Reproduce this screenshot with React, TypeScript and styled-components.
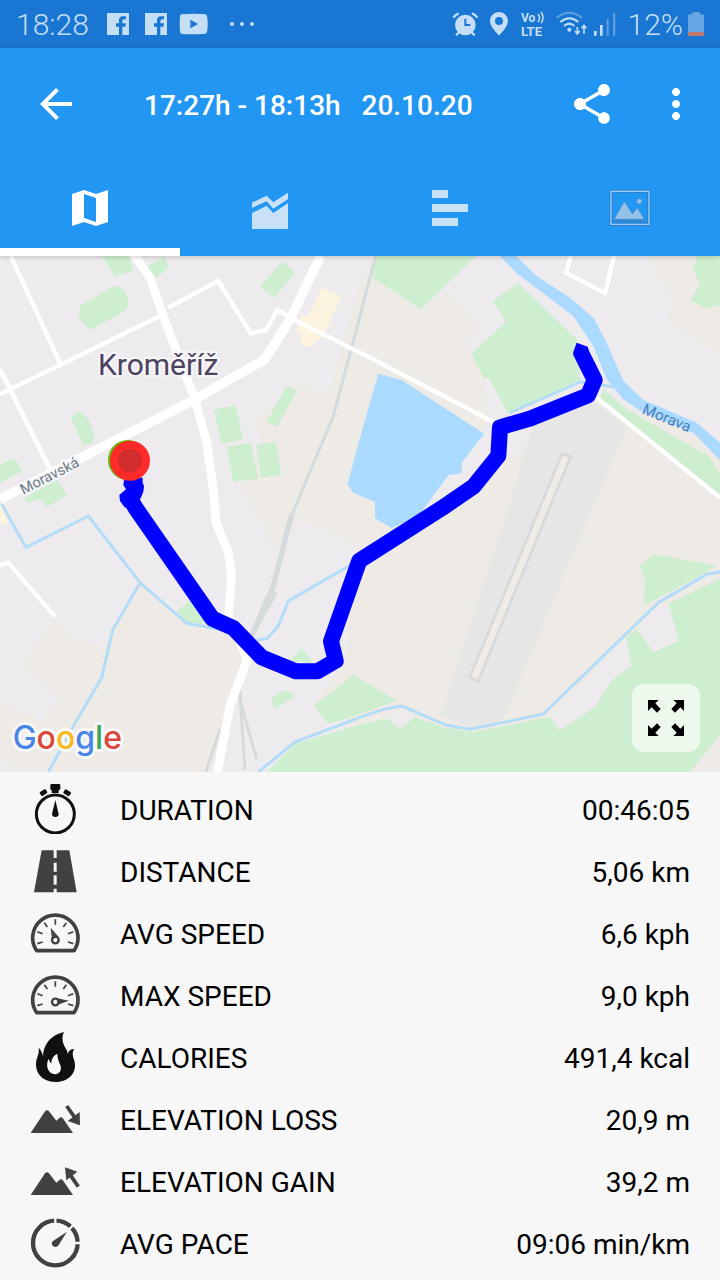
import React from "react";
import styled, { createGlobalStyle } from "styled-components";
import { MdArrowBack, MdMoreVert, MdShare } from "react-icons/md";

const GlobalStyle = createGlobalStyle`
  *, *::before, *::after { box-sizing: border-box; }
  body {
    margin: 0;
    background: #f7f7f7;
    color: #000;
    font-family: Roboto, "Liberation Sans", sans-serif;
  }
`;

const Screen = styled.div`
  display: flex;
  flex-direction: column;
  min-height: 100vh;
`;

const StatusBar = styled.div`
  display: flex;
  align-items: center;
  justify-content: space-between;
  height: 48px;
  padding: 0 16px;
  background: #1976d2;
  color: #c4def6;
`;

const StatusGroup = styled.div<{ $gap: number }>`
  display: flex;
  align-items: center;
  gap: ${(p) => p.$gap}px;
`;

const StatusText = styled.span`
  padding-top: 2px;
  font-size: 30px;
  line-height: 36px;
  font-weight: 300;
`;

const Glyph = styled.svg`
  display: block;
  flex: none;
`;

const TopBar = styled.header`
  background: #2196f3;
  color: #fff;
  position: relative;
  z-index: 1;
  box-shadow: 0 1px 5px rgba(0, 0, 0, 0.2);
`;

const Toolbar = styled.div`
  display: flex;
  align-items: center;
  height: 112px;
  padding: 0 20px 0 32px;
`;

const IconButton = styled.button`
  display: flex;
  padding: 0;
  border: 0;
  background: none;
  color: inherit;
  cursor: pointer;
`;

const Title = styled.h1`
  flex: 1;
  margin: 0 0 0 64px;
  padding-top: 4px;
  font-size: 28px;
  line-height: 36px;
  font-weight: 500;
  white-space: pre;
`;

const Actions = styled.div`
  display: flex;
  gap: 36px;
`;

const Tabs = styled.div`
  display: grid;
  grid-template-columns: repeat(4, 1fr);
`;

const Tab = styled.button<{ $active?: boolean }>`
  display: flex;
  align-items: center;
  justify-content: center;
  height: 96px;
  padding: 8px 0 0;
  border: 0;
  border-bottom: 8px solid ${(p) => (p.$active ? "#fff" : "transparent")};
  background: none;
  color: ${(p) => (p.$active ? "#fff" : "#c8e1f7")};
  cursor: pointer;
`;

const MapPanel = styled.section`
  position: relative;
  aspect-ratio: 720 / 516;
  overflow: hidden;
`;

const MapDrawing = styled.svg`
  display: block;
  width: 100%;
  height: 100%;
`;

const ExpandButton = styled.button`
  position: absolute;
  right: 20px;
  bottom: 20px;
  display: flex;
  align-items: center;
  justify-content: center;
  width: 68px;
  height: 68px;
  padding: 0;
  border: 0;
  border-radius: 12px;
  background: rgba(255, 255, 255, 0.65);
  cursor: pointer;
`;

const Stats = styled.dl`
  margin: 0;
  padding: 6px 30px;
`;

const StatRow = styled.div`
  display: flex;
  align-items: center;
  height: 62px;
  font-size: 28px;
  line-height: 36px;
`;

const StatLabel = styled.dt`
  flex: 1;
  margin-left: 40px;
  padding-top: 4px;
`;

const StatValue = styled.dd`
  margin: 0;
  padding-top: 4px;
`;

/* Status bar glyphs */

const Facebook = () => (
  <Glyph width="22" height="22" viewBox="0 0 66 66" aria-hidden="true">
    <path
      fill="currentColor"
      d="M0 0H66V66H46V41H55L57 31H46V24Q46 19 51 19H57V10H48Q36 10 36 22V31H27V41H36V66H0Z"
    />
  </Glyph>
);

const YouTube = () => (
  <Glyph width="32" height="22" viewBox="0 0 96 66" aria-hidden="true">
    <path
      fill="currentColor"
      fillRule="evenodd"
      d="M6 4Q42 0 80 4Q86 6 86 33Q86 60 80 62Q42 66 6 62Q2 60 2 33Q2 6 6 4ZM34 20V46L57 33Z"
    />
  </Glyph>
);

const MoreDots = () => (
  <Glyph width="32" height="22" viewBox="0 0 32 22" aria-hidden="true">
    <g fill="currentColor">
      <circle cx="9" cy="11" r="2" />
      <circle cx="19" cy="11" r="2" />
      <circle cx="29" cy="11" r="2" />
    </g>
  </Glyph>
);

const Alarm = () => (
  <Glyph width="26" height="24" viewBox="0 0 78 72" aria-hidden="true">
    <circle cx="40" cy="39" r="31" fill="currentColor" />
    <g stroke="currentColor" strokeWidth="7" fill="none">
      <path d="M4 17Q10 8 20 4M76 17Q70 8 60 4M22 60L12 70M58 60L68 70" />
    </g>
    <path d="M40 20V39H55" stroke="#1976d2" strokeWidth="6" fill="none" />
  </Glyph>
);

const Pin = () => (
  <Glyph width="18" height="24" viewBox="0 0 54 72" aria-hidden="true">
    <path
      fill="currentColor"
      fillRule="evenodd"
      d="M27 0C12 0 0 12 0 27C0 42 14 56 27 71C40 56 54 42 54 27C54 12 42 0 27 0ZM27 15A12 12 0 1 1 27 39A12 12 0 1 1 27 15Z"
    />
  </Glyph>
);

const VoLte = () => (
  <Glyph width="24" height="34" viewBox="0 0 24 34">
    <g fill="currentColor" fontFamily="Roboto, sans-serif" fontWeight="700">
      <text x="1" y="15" fontSize="12">
        Vo
      </text>
      <text x="1" y="29" fontSize="13">
        LTE
      </text>
    </g>
    <path
      d="M18 7Q21 11 18 15M21 5Q25 11 21 16"
      fill="none"
      stroke="currentColor"
      strokeWidth="1.5"
    />
  </Glyph>
);

const WifiSignal = () => (
  <Glyph width="60" height="26" viewBox="0 0 180 78" aria-hidden="true">
    <g fill="none" stroke="currentColor" strokeWidth="6">
      <path d="M2 21Q40 -10 78 21" opacity="0.4" />
      <path d="M13 33Q40 10 67 33" />
      <path d="M24 45Q40 31 55 45" />
      <path d="M64 48V68M57 60L64 69L71 60M84 68V44M77 52L84 43L91 52" strokeWidth="5" />
    </g>
    <circle cx="40" cy="56" r="6" fill="currentColor" />
    <g fill="currentColor">
      <path d="M114 60H122V74H114ZM132 42H140V74H132Z" />
      <path d="M152 24H158V74H152ZM171 6H178V74H171Z" opacity="0.4" />
    </g>
  </Glyph>
);

const Battery = () => (
  <Glyph width="16" height="24" viewBox="0 0 48 72" aria-hidden="true">
    <path fill="#64a5e3" d="M13 0H36V7H44Q48 7 48 11V60H0V11Q0 7 4 7H13Z" />
    <path fill="#c4776c" d="M0 60H48V68Q48 72 44 72H4Q0 72 0 68Z" />
  </Glyph>
);

/* Tab glyphs */

const MapGlyph = () => (
  <Glyph width="36" height="40" viewBox="0 0 36 40" aria-hidden="true">
    <path
      fill="currentColor"
      fillRule="evenodd"
      d="M0 6L12 2L24 6L36 2V34L24 38L12 34L0 38ZM12 6V30L24 34V10Z"
    />
  </Glyph>
);

const ChartGlyph = () => (
  <Glyph width="36" height="42" viewBox="0 0 108 126" aria-hidden="true">
    <path fill="currentColor" d="M0 78L44 56L64 78L108 48V126H0Z" />
    <path fill="currentColor" d="M0 47L44 26L64 46L108 17V36L64 65L44 43L0 63Z" />
  </Glyph>
);

const BarsGlyph = () => (
  <Glyph width="36" height="40" viewBox="0 0 36 40" aria-hidden="true">
    <path fill="currentColor" d="M0 2H16V10H0ZM0 16H36V24H0ZM0 30H26V38H0Z" />
  </Glyph>
);

const PhotoGlyph = () => (
  <Glyph width="42" height="40" viewBox="0 0 126 120" aria-hidden="true">
    <rect x="3" y="7" width="120" height="105" fill="none" stroke="#3379bd" strokeWidth="3" />
    <rect x="6" y="10" width="114" height="99" fill="none" stroke="#9ccbf5" strokeWidth="4" />
    <rect x="10" y="14" width="106" height="91" fill="none" stroke="#3379bd" strokeWidth="2" />
    <path d="M14 95H108V103H14Z" fill="#2c86d6" />
    <path
      d="M15 94L46 40L70 77L85 59L106 94Z"
      fill="#93c1e8"
      stroke="#3f86c8"
      strokeWidth="2"
    />
    <circle cx="91" cy="40" r="8" fill="#93c1e8" stroke="#3f86c8" strokeWidth="2" />
  </Glyph>
);

/* Statistic glyphs, all on a 150-unit square */

const INK = "#414143";

const StatGlyph = ({ children }: { children: React.ReactNode }) => (
  <Glyph width="50" height="50" viewBox="0 0 150 150" aria-hidden="true">
    {children}
  </Glyph>
);

const Stopwatch = () => (
  <StatGlyph>
    <circle cx="76" cy="90" r="57" fill="none" stroke="#101010" strokeWidth="9" />
    <path fill="#101010" d="M64 0H87Q91 0 91 4V14Q91 18 86 18V27H65V18Q61 18 61 14V4Q61 0 64 0Z" />
    <rect x="30" y="19" width="21" height="14" rx="3" fill="#101010" transform="rotate(-32 40 26)" />
    <rect x="101" y="19" width="21" height="14" rx="3" fill="#101010" transform="rotate(32 111 26)" />
    <path fill="#101010" d="M76 48L86 90Q86 99 76 99Q66 99 66 90Z" />
  </StatGlyph>
);

const Road = () => (
  <StatGlyph>
    <path
      fill={INK}
      fillRule="evenodd"
      d="M35 13H118L140 139H12ZM71 13V36H80V13ZM71 50V77H80V50ZM71 88V116H80V88ZM71 128V139H80V128Z"
    />
  </StatGlyph>
);

const Gauge = ({ needle }: { needle: string }) => (
  <StatGlyph>
    <g fill="none" stroke={INK}>
      <path d="M20 128A68 68 0 1 1 132 128Z" strokeWidth="11" strokeLinejoin="round" />
      <path
        d="M76 34V50M43 44L52 57M109 44L100 57M22 71L38 77M130 71L114 77M22 107L38 102M130 107L114 102"
        strokeWidth="5"
      />
      <circle cx="76" cy="96" r="10" strokeWidth="7" />
    </g>
    <path d={needle} fill={INK} />
  </StatGlyph>
);

const Flame = () => (
  <StatGlyph>
    <path
      fill="#101010"
      fillRule="evenodd"
      d="M102 0C94 16 97 34 108 50C112 57 113 62 113 66C116 56 122 51 133 51C126 60 128 70 131 80C146 118 118 150 76 150C34 150 11 118 20 82C24 70 28 60 26 47C33 54 36 62 39 72C39 42 60 8 102 0ZM82 66C70 70 64 82 64 94C60 92 58 86 56 80C50 90 50 104 55 114C60 123 68 127 76 127C90 126 96 112 91 100C87 90 82 80 82 66Z"
    />
  </StatGlyph>
);

const Mountains = ({ shaft, head }: { shaft: string; head: string }) => (
  <StatGlyph>
    <path fill={INK} d="M2 117L45 52Q51 45 57 52L79 80L89 71Q94 68 98 72L129 117Z" />
    <path d={shaft} stroke={INK} strokeWidth="11" />
    <path d={head} fill={INK} />
  </StatGlyph>
);

const Pace = () => (
  <StatGlyph>
    <circle cx="76" cy="75" r="67" fill="none" stroke={INK} strokeWidth="13" />
    <path d="M76 20V0M131 75H150M112 39L130 21" stroke="#f7f7f7" strokeWidth="7" />
    <path fill={INK} d="M111 41L86 81Q80 90 70 85Q61 77 69 69Z" />
  </StatGlyph>
);

const stats: { label: string; value: string; icon: React.ReactNode }[] = [
  { label: "DURATION", value: "00:46:05", icon: <Stopwatch /> },
  { label: "DISTANCE", value: "5,06 km", icon: <Road /> },
  { label: "AVG SPEED", value: "6,6 kph", icon: <Gauge needle="M62 59L86 87L66 94Z" /> },
  { label: "MAX SPEED", value: "9,0 kph", icon: <Gauge needle="M117 92L82 85L83 104Z" /> },
  { label: "CALORIES", value: "491,4 kcal", icon: <Flame /> },
  {
    label: "ELEVATION LOSS",
    value: "20,9 m",
    icon: <Mountains shaft="M110 36L134 70" head="M113 81L149 54L150 94Z" />,
  },
  {
    label: "ELEVATION GAIN",
    value: "39,2 m",
    icon: <Mountains shaft="M145 92L120 56" head="M105 34L142 47L109 73Z" />,
  },
  { label: "AVG PACE", value: "09:06 min/km", icon: <Pace /> },
];

/* The map is drawn at three units to the pixel. */

const ROUTE =
  "M1742 288L1784 372L1764 418L1590 488L1500 514L1495 599L1420 692L1325 757L1078 914L993 1156L1007 1214L952 1246L888 1246L785 1204L700 1116L637 1088L406 755L382 712";

const RouteMap = () => (
  <MapDrawing viewBox="0 0 2160 1548" preserveAspectRatio="xMidYMid slice" role="img" aria-label="Route map">
    <rect width="2160" height="1548" fill="#edebee" />

    <g fill="#eeebe6">
      <path d="M900 385L985 410L1085 60L1110 50L1262 160L1340 105L1442 210L1398 268L1425 292L1450 360L1470 480L1450 540L1385 620L1350 680L1590 580L1700 520L1820 450L2160 740V1548H1700L1060 1400L940 1340L1040 1210L1060 900L890 790L840 900L790 840L800 810L760 774L690 640L790 560L760 500Z" />
      <path d="M420 980L540 1090L700 1144L740 1204L690 1334L650 1548H60L0 1510V1340L130 1394L172 1324L60 1224L160 1084L220 1140L310 1175L340 1124Z" />
      <path d="M1940 0L2015 140L1998 195L2160 300V0Z" />
      <path d="M1800 420L1920 465L2090 540L2160 610V680L2080 600L1870 470Z" />
    </g>
    <path fill="#edebee" d="M890 790L1070 870L1060 910L840 930Z" />
    <path fill="#edebee" d="M1460 500L1580 520V580L1500 600L1330 740L1260 774L1345 650L1385 655V620Z" />
    <path fill="#e6e6e6" d="M1597 510L1780 430L1880 520L1770 774L1505 1400L1410 1412L1322 1378L1520 774Z" />
    <path fill="#efece8" stroke="#d9d9d9" strokeWidth="8" d="M1686 594L1712 602L1434 1276L1410 1262Z" />

    <g fill="#cdeecf">
      <path d="M305 0L345 60L400 45L385 0Z" />
      <path d="M435 35L495 0L505 35L470 65Z" />
      <path d="M240 150L345 88L375 105L388 145L375 165L270 222L235 185Z" />
      <path d="M848 16L885 50L822 126L780 92Z" />
      <path d="M860 390L890 405L832 512L800 497Z" />
      <path d="M642 460L708 448L728 550L665 565Z" />
      <path d="M680 572L752 560L775 668L700 678Z" />
      <path d="M770 567L826 557L845 655L783 667Z" />
      <path d="M212 484L240 466L265 490L283 540L280 560L250 568Z" />
      <path d="M0 625L45 606L66 645L0 682Z" />
      <path d="M70 728L170 672L200 718L142 752L120 728L85 740Z" />
      <path d="M1130 0H1428L1262 160L1114 62Z" />
      <path d="M1555 82L1730 250L1740 372L1525 475L1465 362L1452 370L1415 292L1518 197L1478 135Z" />
      <path d="M2090 0H2160V145L2120 158L2072 132L2100 85L2080 40Z" />
      <path d="M1810 400L1880 460L2125 600L2160 650V715L1800 430Z" />
      <path d="M530 1064L570 1036L650 1084L600 1104L555 1099Z" />
      <path d="M905 1176L940 1222L870 1214Z" />
      <path d="M812 1326L855 1301L887 1319L825 1359Z" />
      <path d="M943 1349L1060 1256L1190 1334L1080 1374L985 1404Z" />
      <path d="M1960 894L2148 929L2120 949L1930 1049L1937 974L1920 929Z" />
      <path d="M800 1548L885 1464L1080 1406L1170 1386L1245 1384L1330 1414L1420 1429L1650 1382L1878 1144L2005 1044L2160 969V1438L2070 1548Z" />
    </g>
    <g fill="#edebee">
      <path d="M1160 1386L1200 1419L1245 1384L1210 1366Z" />
      <path d="M1650 1382L1678 1424L1785 1354L1835 1274L1895 1229L1878 1144Z" />
      <path d="M1910 1118L1960 1189L2037 1154L2005 1044L1980 1040Z" />
    </g>
    <path fill="#fdf4df" d="M965 95L1025 120L970 240L925 275L900 262L905 235L890 228L905 180L925 180Z" />
    <path fill="#fdf4df" d="M0 748L14 758L24 798L0 806Z" />

    <path
      fill="#aadaff"
      d="M1135 353L1205 372L1452 533L1385 620V652L1345 658L1255 780L1175 816L1125 787V738L1060 710L1043 685L1080 545Z"
    />
    <path
      fill="#aadaff"
      d="M1500 0H1548L1610 60L1710 125L1780 185L1815 250L1870 375L1930 432L1985 455L2090 500L2160 560V612L2080 530L1930 470L1870 430L1820 370L1780 270L1720 180L1550 52Z"
    />
    <g fill="none" stroke="#b3dcf9" strokeWidth="9" strokeLinejoin="round">
      <path d="M5 745L30 790L78 874L265 780L420 980L560 1102L700 1128" />
      <path d="M420 980L338 1122L305 1265L220 1410L145 1548" />
      <path d="M770 1152L800 1148L835 1110L865 1035L1060 922" />
      <path d="M775 1548L885 1458L1080 1384L1150 1360L1205 1350L1335 1406L1410 1420L1630 1374L1975 1040L2120 955L2160 948" />
      <path d="M1530 470L1740 378L1850 394" />
    </g>

    <g fill="none" stroke="#d5dadc" strokeWidth="9">
      <path d="M1127 0L1080 180L1000 480L870 790" />
      <path d="M875 774L820 990L770 1110" strokeWidth="16" />
      <path d="M828 1008L765 1120" strokeWidth="12" />
      <path d="M806 1020L755 1140" strokeWidth="16" />
      <path d="M720 1300L722 1340L770 1510M720 1320L735 1540M660 1420L618 1548" />
    </g>

    <g fill="none" stroke="#fff" strokeWidth="13" strokeLinejoin="round">
      <path d="M32 0L182 325M0 415L480 180M0 340L150 640" />
      <path d="M505 155L655 75L752 232L798 222L832 162L900 200L1120 310L1480 498" />
      <path d="M1712 0L1698 50L1815 112L1842 0M1790 425L2160 725" />
      <path d="M0 927L25 920L165 1082" />
    </g>
    <g fill="none" stroke="#fff" strokeLinejoin="round">
      <path
        d="M392 -20L450 65L490 180L520 260L585 430L620 560L640 700L648 800L685 890L695 960L685 1080L730 1180L742 1210L690 1350L652 1548"
        strokeWidth="26"
      />
      <path d="M0 730L585 430L795 310L870 190L962 0" strokeWidth="28" />
    </g>

    <g fontFamily="Roboto, sans-serif" strokeLinejoin="round" paintOrder="stroke">
      <text x="294" y="357" fontSize="90" fill="#4c4260" stroke="#f6f5f8" strokeWidth="14">
        Kroměříž
      </text>
      <text
        x="70"
        y="716"
        fontSize="44"
        fill="#6a7980"
        stroke="#f6f5f8"
        strokeWidth="12"
        transform="rotate(-27 70 716)"
      >
        Moravská
      </text>
      <text x="1924" y="472" fontSize="46" fill="#4b80b8" transform="rotate(22 1924 472)">
        Morava
      </text>
    </g>

    <path d={ROUTE} fill="none" stroke="#0000fe" strokeWidth="48" strokeLinejoin="round" />
    <path d="M1721 300L1719 290L1730 260L1763 272L1767 285L1745 305Z" fill="#0000fe" />
    <path
      d="M373 665H428V680L432 690L430 707L422 727L405 745L375 755L360 735L358 717L378 700L370 687Z"
      fill="#0000fe"
    />
    <circle cx="384" cy="612" r="60" fill="#65b800" />
    <circle cx="390" cy="614" r="60" fill="#ff2a2a" />
    <circle cx="390" cy="614" r="36" fill="#d22d2d" />

    <text
      x="38"
      y="1478"
      fontFamily="Inter, sans-serif"
      fontSize="96"
      fontWeight="500"
      stroke="#f7f7f7"
      strokeWidth="18"
      strokeLinejoin="round"
      paintOrder="stroke"
    >
      <tspan fill="#4885e8">G</tspan>
      <tspan fill="#dc473c">o</tspan>
      <tspan fill="#f3bb1c">o</tspan>
      <tspan fill="#4885e8">g</tspan>
      <tspan fill="#3ca55a">l</tspan>
      <tspan fill="#dc473c">e</tspan>
    </text>
  </MapDrawing>
);

const CORNER_ARROW = "M0 0H32L22 10L38 27L27 38L11 22L0 33Z";

const ExpandGlyph = () => (
  <Glyph width="36" height="36" viewBox="0 0 108 108" aria-hidden="true">
    <path d={CORNER_ARROW} />
    <path d={CORNER_ARROW} transform="matrix(-1 0 0 1 108 0)" />
    <path d={CORNER_ARROW} transform="matrix(1 0 0 -1 0 108)" />
    <path d={CORNER_ARROW} transform="matrix(-1 0 0 -1 108 108)" />
  </Glyph>
);

export default function App() {
  return (
    <>
      <GlobalStyle />
      <Screen>
        <StatusBar>
          <StatusGroup $gap={18}>
            <StatusText>18:28</StatusText>
            <StatusGroup $gap={16}>
              <Facebook />
              <StatusGroup $gap={12}>
                <Facebook />
                <YouTube />
                <MoreDots />
              </StatusGroup>
            </StatusGroup>
          </StatusGroup>
          <StatusGroup $gap={12}>
            <Alarm />
            <Pin />
            <VoLte />
            <WifiSignal />
            <StatusGroup $gap={5}>
              <StatusText>12%</StatusText>
              <Battery />
            </StatusGroup>
          </StatusGroup>
        </StatusBar>

        <TopBar>
          <Toolbar>
            <IconButton type="button" aria-label="Back">
              <MdArrowBack size={48} />
            </IconButton>
            <Title>{"17:27h - 18:13h   20.10.20"}</Title>
            <Actions>
              <IconButton type="button" aria-label="Share">
                <MdShare size={48} />
              </IconButton>
              <IconButton type="button" aria-label="More options">
                <MdMoreVert size={48} />
              </IconButton>
            </Actions>
          </Toolbar>
          <Tabs role="tablist">
            <Tab type="button" role="tab" aria-selected="true" aria-label="Map" $active>
              <MapGlyph />
            </Tab>
            <Tab type="button" role="tab" aria-selected="false" aria-label="Charts">
              <ChartGlyph />
            </Tab>
            <Tab type="button" role="tab" aria-selected="false" aria-label="Splits">
              <BarsGlyph />
            </Tab>
            <Tab type="button" role="tab" aria-selected="false" aria-label="Photos">
              <PhotoGlyph />
            </Tab>
          </Tabs>
        </TopBar>

        <MapPanel>
          <RouteMap />
          <ExpandButton type="button" aria-label="Full screen">
            <ExpandGlyph />
          </ExpandButton>
        </MapPanel>

        <Stats>
          {stats.map((s) => (
            <StatRow key={s.label}>
              {s.icon}
              <StatLabel>{s.label}</StatLabel>
              <StatValue>{s.value}</StatValue>
            </StatRow>
          ))}
        </Stats>
      </Screen>
    </>
  );
}
